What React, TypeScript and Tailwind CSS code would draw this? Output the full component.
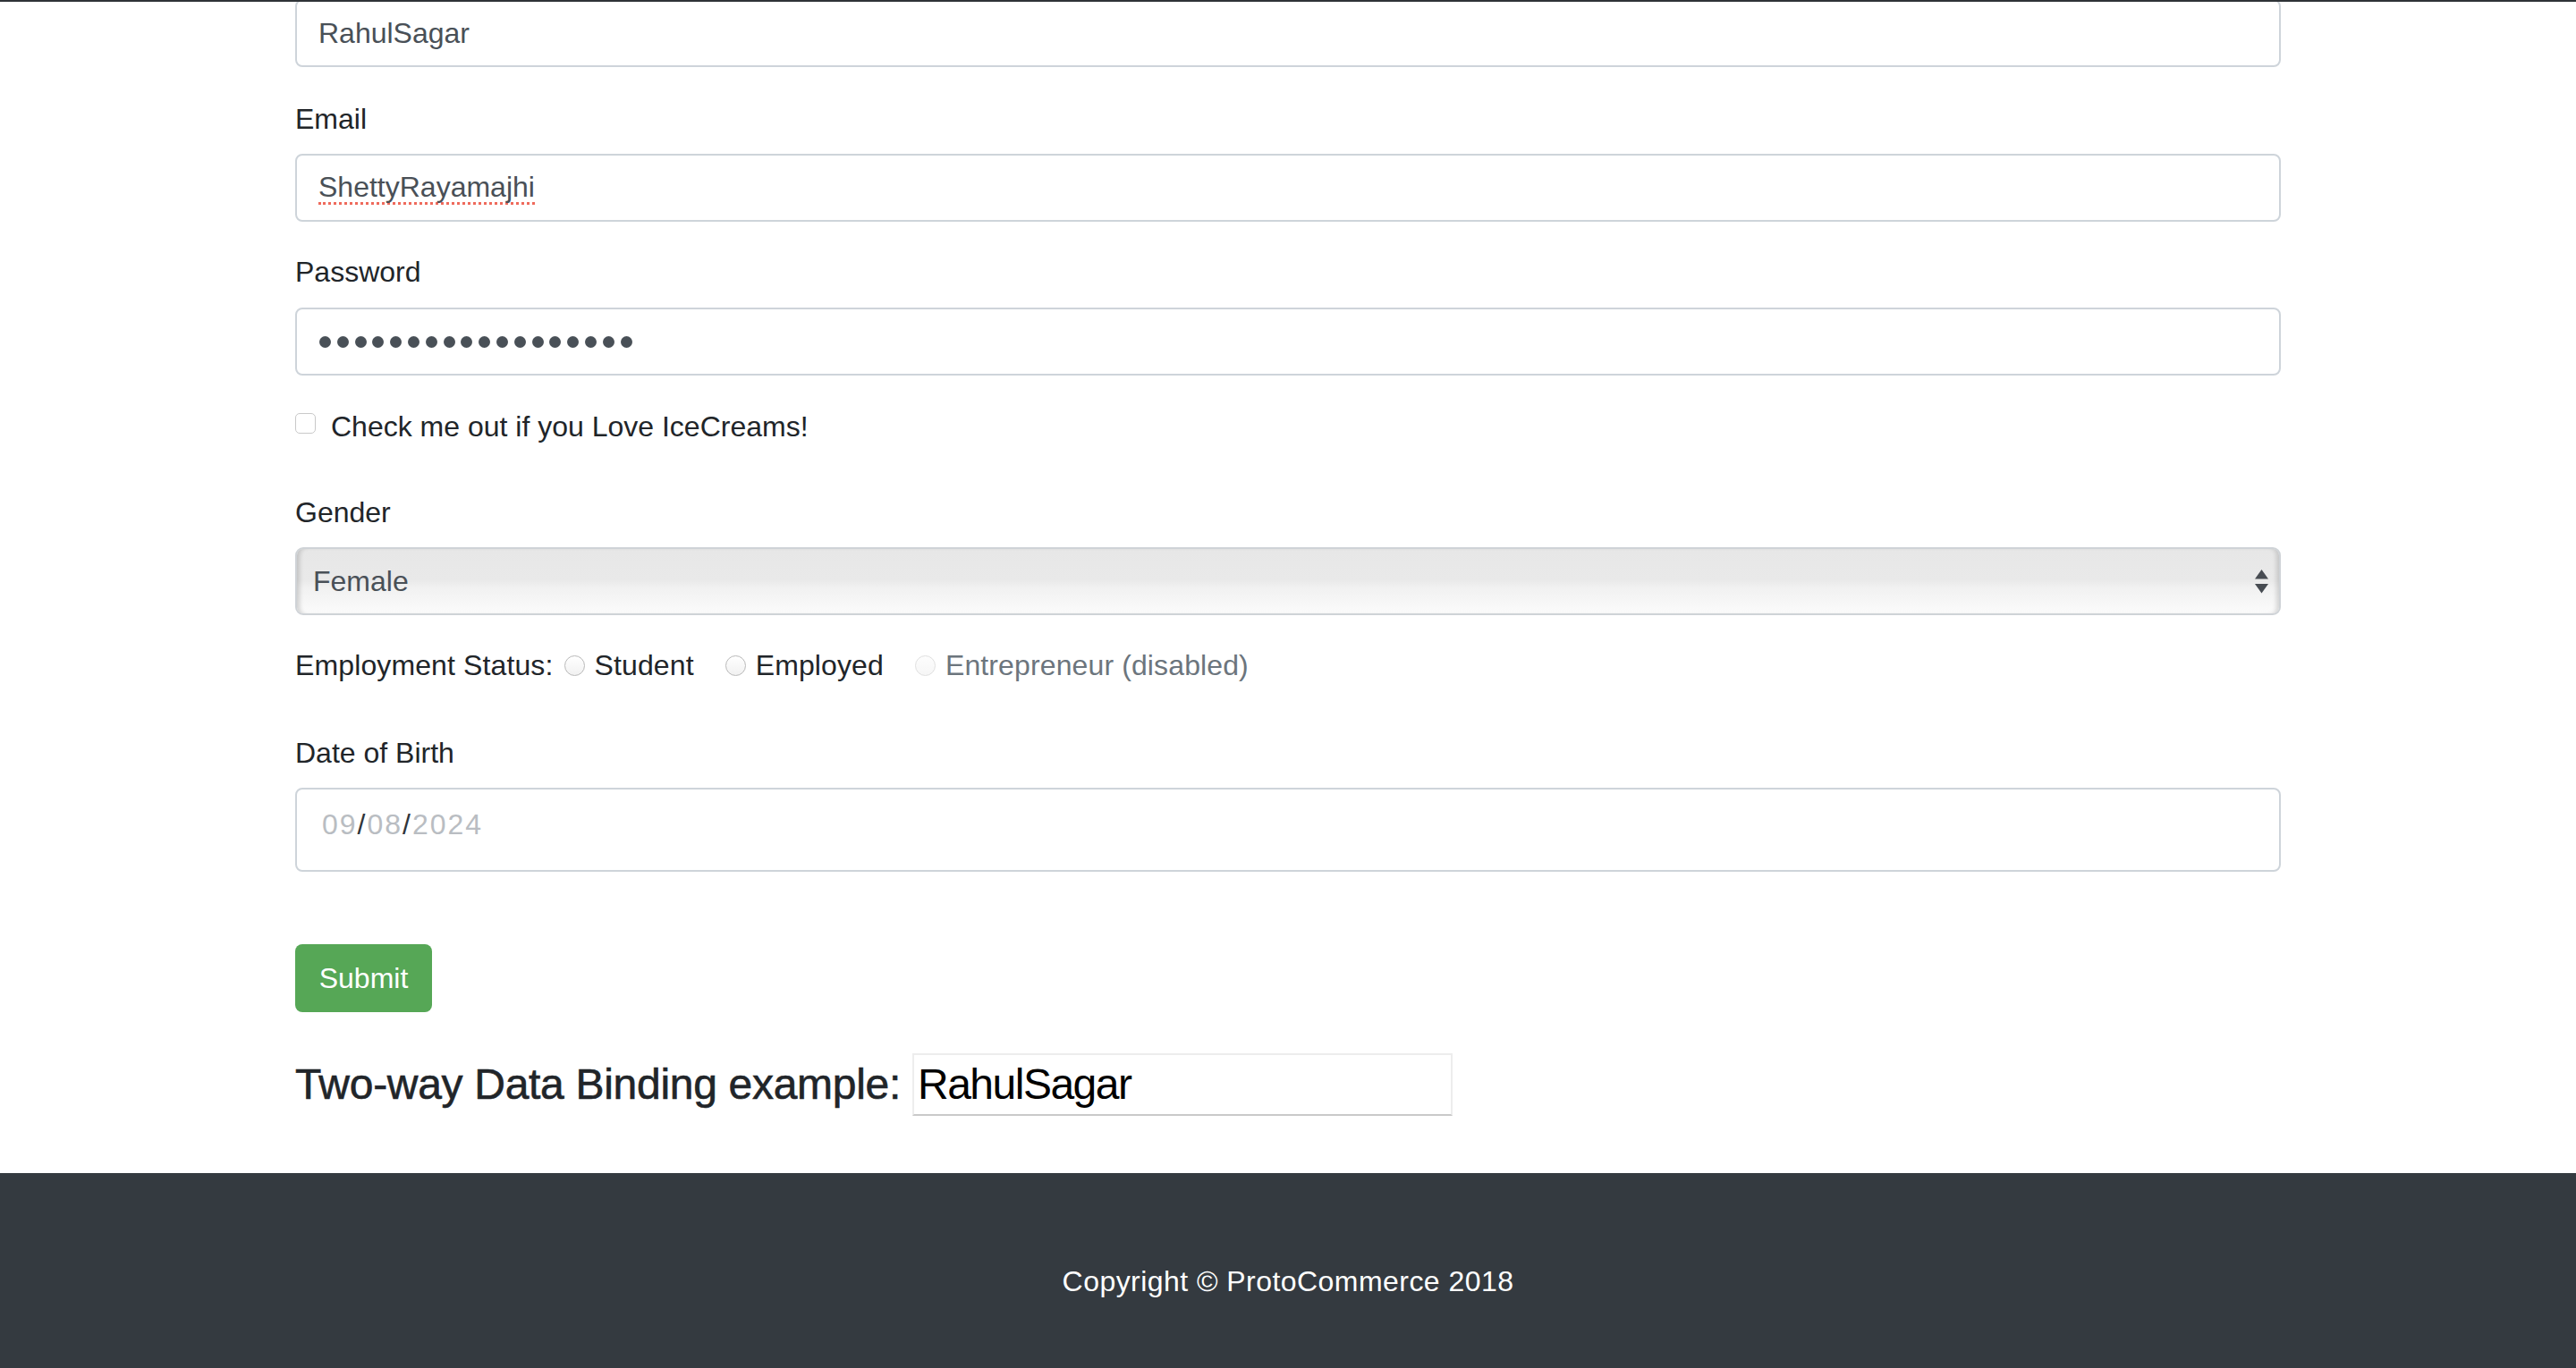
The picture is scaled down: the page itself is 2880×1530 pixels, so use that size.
import React from 'react';

const Field: React.FC<{ className?: string; children: React.ReactNode }> = ({ className = '', children }) => (
  <div className={`flex h-[76px] items-center rounded-[8px] border-2 border-[#ced4da] bg-white px-[24px] text-[#495057] ${className}`}>
    {children}
  </div>
);

const Radio: React.FC<{ disabled?: boolean }> = ({ disabled }) => (
  <span
    className={`mr-[11px] inline-block h-[23px] w-[23px] rounded-full border ${
      disabled
        ? 'border-[#e0e0e0] bg-[linear-gradient(to_bottom,#fdfdfd,#f6f6f6)]'
        : 'border-[#b9b9b9] bg-[linear-gradient(to_bottom,#ffffff,#f1f1f1)]'
    }`}
  />
);

export default function App() {
  const dots = Array.from({ length: 18 });

  return (
    <div className="relative h-[1530px] overflow-hidden bg-white font-['Liberation_Sans',Arial,sans-serif] text-[32px] leading-[48px] text-[#212529]">
      {/* edge of the bar above, scrolled out of view */}
      <div className="absolute inset-x-0 top-0 z-10 h-[2px] bg-[#2f3337]" />

      <main className="mx-auto w-[2220px]">
        <Field className="-mt-px">RahulSagar</Field>

        <label className="mt-[34px] mb-[15px] block">Email</label>
        <Field>
          <span className="border-b-[3px] border-dotted border-[#ef6a5c] leading-[34px]">ShettyRayamajhi</span>
        </Field>

        <label className="mt-[32px] mb-[16px] block">Password</label>
        <Field className="gap-[6.8px] pl-[25px]">
          {dots.map((_, i) => (
            <span key={i} className="inline-block h-[13px] w-[13px] rounded-full bg-[#495057]" />
          ))}
        </Field>

        <div className="relative mt-[33px] flex h-[48px] items-center pl-[40px]">
          <span className="absolute left-0 top-[9px] h-[23px] w-[23px] rounded-[5px] border border-[#c9c9c9] bg-white" />
          <span>Check me out if you Love IceCreams!</span>
        </div>

        <label className="mt-[48px] mb-[15px] block">Gender</label>
        <div className="relative flex h-[76px] items-center rounded-[9px] border-2 border-[#cfd3d7] bg-[linear-gradient(to_bottom,#e7e7e7_0%,#e9e9e9_48%,#f1f1f1_60%,#fbfbfb_100%)] pl-[18px] text-[#495057] shadow-[inset_6px_0_5px_-3px_rgba(0,0,0,0.16),inset_-6px_0_5px_-3px_rgba(0,0,0,0.14)]">
          <span>Female</span>
          <svg className="absolute right-[12px] top-[23px]" width="15" height="27" viewBox="0 0 15 27">
            <path d="M7.5 0 L15 10.5 L0 10.5 Z" fill="#474c52" />
            <path d="M0 16 L15 16 L7.5 26.5 Z" fill="#474c52" />
          </svg>
        </div>

        <div className="mt-[32px] flex h-[48px] items-center tracking-[0.12px]">
          <span className="mr-[12px]">Employment Status:</span>
          <span className="mr-[35px] inline-flex items-center">
            <Radio />
            Student
          </span>
          <span className="mr-[35px] inline-flex items-center">
            <Radio />
            Employed
          </span>
          <span className="inline-flex items-center text-[#6c757d]">
            <Radio disabled />
            Entrepreneur (disabled)
          </span>
        </div>

        <label className="mt-[50px] mb-[15px] block">Date of Birth</label>
        <div className="flex h-[94px] items-start rounded-[8px] border-2 border-[#ced4da] bg-white pl-[28px] pt-[15px] tracking-[2px] text-[#b9bdc2]">
          <span>09</span>
          <span className="text-[#30353a]">/</span>
          <span>08</span>
          <span className="text-[#30353a]">/</span>
          <span>2024</span>
        </div>

        <button
          type="button"
          className="mt-[81px] h-[76px] w-[153px] rounded-[8px] bg-[#56a756] text-[32px] leading-[48px] text-white"
        >
          Submit
        </button>

        <div className="mt-[46px] flex h-[70px] items-center gap-[13px]">
          <h4 className="text-[48px] leading-[58px] tracking-[-0.3px] text-[#212529] [-webkit-text-stroke:0.6px_#212529]">
            Two-way Data Binding example:
          </h4>
          <div className="flex h-[70px] w-[604px] items-center border-2 border-[#ededed] border-b-[#c9c9c9] bg-white pl-[4px] text-[48px] tracking-[-1.5px] text-black">
            RahulSagar
          </div>
        </div>
      </main>

      <footer className="mt-[64px] h-[240px] bg-[#343a40] pt-[97px] text-center tracking-[0.45px] text-white">
        <p>Copyright © ProtoCommerce 2018</p>
      </footer>
    </div>
  );
}
